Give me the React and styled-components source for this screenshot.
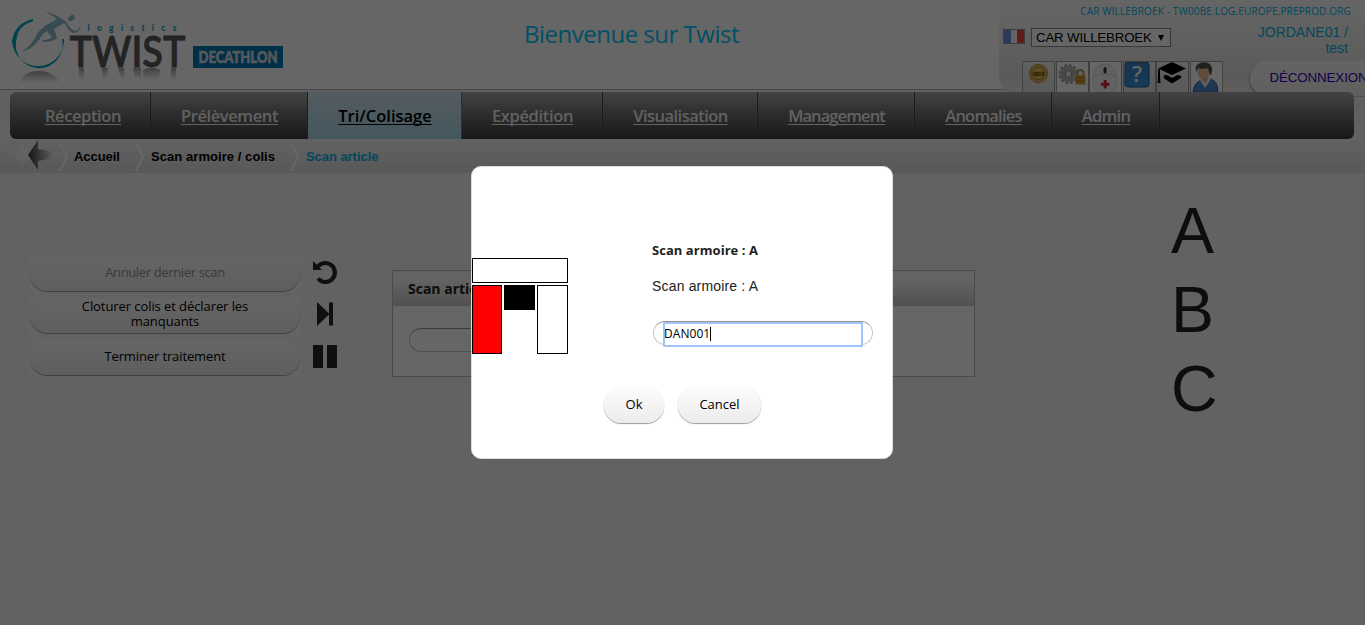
import React from "react";
import styled, { createGlobalStyle } from "styled-components";

const trebuchet = `"Trebuchet MS", "Open Sans", "Noto Sans", sans-serif`;
const arial = `Arial, "Liberation Sans", sans-serif`;

const GlobalStyle = createGlobalStyle`
  * { box-sizing: border-box; }
  body {
    margin: 0;
    height: 625px;
    overflow: hidden;
    background: #f5f5f5;
    color: #222;
    font: 13px ${trebuchet};
  }
`;

const Header = styled.header`
  display: flex;
  height: 92px;
  background: linear-gradient(#fff 0 89px, #b5b5b5 89px 90px, #eeeeee 90px);
`;
const Logo = styled.svg`
  flex: none;
  width: 300px;
  height: 89px;
  font-variant-ligatures: none;
`;
const Welcome = styled.h1`
  flex: 1;
  margin: 0;
  padding: 17px 0 0 224px;
  font-size: 24px;
  line-height: 34px;
  font-weight: 400;
  letter-spacing: -0.5px;
  color: #00c8ff;
  white-space: nowrap;
`;
const Account = styled.section`
  flex: none;
  width: 366px;
  height: 97px;
  overflow: hidden;
  border-bottom: 1px solid #c4c2be;
  border-bottom-left-radius: 24px;
  background: linear-gradient(#fdfdfd, #f1f0ef 40%, #e4e2df 80%, #efedea);
`;
const Server = styled.div`
  padding: 4px 14px 0 0;
  height: 23px;
  font-size: 10px;
  line-height: 15px;
  letter-spacing: 0.16px;
  text-align: right;
  color: #00b4e8;
`;
const AccountRow = styled.div`
  display: flex;
  height: 38px;
  padding-left: 4px;
`;
const Flag = styled.span`
  width: 22px;
  height: 15px;
  margin-top: 6px;
  border: 1px solid #999;
  background: linear-gradient(90deg, #6d8fe0 0 33%, #f8f8f8 33% 66%, #ee4444 66%);
`;
const SiteSelect = styled.div`
  display: flex;
  align-items: center;
  justify-content: space-between;
  width: 140px;
  height: 19px;
  margin: 5px 0 0 6px;
  padding: 0 6px 0 4px;
  border: 1px solid #8a8a8a;
  background: #fff;
  font: 13.33px ${arial};
  letter-spacing: -0.2px;
  color: #000;
  white-space: nowrap;
`;
const Caret = styled.span`
  border: 3.5px solid transparent;
  border-top: 6px solid #000;
  border-bottom: 0;
`;
const User = styled.div`
  flex: 1;
  padding: 1px 17px 0 0;
  font: 14px/16px ${arial};
  text-align: right;
  color: #00b4e8;
`;
const Tools = styled.div`
  display: flex;
  align-items: flex-start;
  padding-left: 23px;
`;
const Tool = styled.span`
  flex: none;
  width: 33px;
  height: 36px;
  margin-right: 0.6px;
  border: 1px solid #a0a0a0;
  background: ${(p) => (p.$plain ? "#fff" : "linear-gradient(#f4f4f4, #dcdbd9)")};
  svg { display: block; width: 30px; height: 30px; }
`;
const Logout = styled.a`
  flex: none;
  width: 150px;
  height: 35px;
  margin-left: 26px;
  padding-left: 20px;
  border-radius: 18px;
  background: linear-gradient(#fbfaf9, #efedea);
  box-shadow: -1px 1px 1px #aaa;
  font: 13.33px/34px ${arial};
  letter-spacing: -0.12px;
  color: #3000c0;
`;

const Nav = styled.nav`
  position: relative;
  display: flex;
  width: 1344px;
  height: 47px;
  margin-left: 10px;
  border-radius: 6px;
  overflow: hidden;
  background: linear-gradient(#a8a8a8, #747474 45%, #3a3a3a);
`;
const NavItem = styled.a`
  flex: none;
  width: ${(p) => p.$w}px;
  padding-left: ${(p) => p.$indent || 1}px;
  border-right: 1px solid ${(p) => (p.$active ? "#5d8191" : "#454545")};
  box-shadow: inset -1px 0 rgba(255, 255, 255, 0.06);
  text-align: center;
  font-size: 16.5px;
  line-height: 47px;
  font-weight: 600;
  letter-spacing: ${(p) => p.$track}px;
  text-decoration: underline;
  text-decoration-thickness: 1px;
  text-decoration-skip-ink: none;
  text-underline-offset: 2px;
  color: ${(p) => (p.$active ? "#000" : "#f2f2f2")};
  background: ${(p) => (p.$active ? "linear-gradient(#d2e6ee, #a9d8ec)" : "none")};
`;

const NavBand = styled.div`
  background: linear-gradient(#eee, #f6f6f6);
`;
const Crumbs = styled.div`
  display: flex;
  align-items: center;
  height: 34px;
  background: linear-gradient(#f4f4f4, #dddddd);
  font: bold 13px ${arial};
  color: #000;
  white-space: nowrap;
`;
const Back = styled.svg`
  width: 40px;
  height: 34px;
  margin-left: 14px;
`;
const Chevron = styled.svg`
  width: 10px;
  height: 30px;
  margin: 2px ${(p) => p.$after}px 0 ${(p) => p.$before}px;
`;
const Crumb = styled.span`
  width: ${(p) => p.$w}px;
  letter-spacing: ${(p) => p.$track || 0}px;
  color: ${(p) => (p.$current ? "#00b4e8" : "#000")};
`;

const Main = styled.main`
  display: flex;
  align-items: flex-start;
  height: 452px;
`;
const Actions = styled.div`
  display: flex;
  flex-direction: column;
  gap: 4px;
  margin: 82px 0 0 29px;
`;
const ActionRow = styled.div`
  display: flex;
  align-items: center;
  gap: 12px;
  height: 38px;
`;
const ActionBack = styled.div`
  width: 272px;
  height: 38px;
  padding: 1px 1px 0;
  background: #fbfbfb;
`;
const Button = styled.button`
  display: block;
  width: ${(p) => p.$w}px;
  height: ${(p) => p.$h || 35}px;
  padding: 0 ${(p) => p.$pad || 0}px ${(p) => p.$lift || 2}px;
  border: 0;
  border-radius: 18px;
  background: linear-gradient(#fdfdfd, #ebebeb);
  box-shadow: 0 1px 1px #999, 0 0 1px #ccc;
  font: 13px/15px ${trebuchet};
  letter-spacing: ${(p) => p.$track || 0}px;
  color: ${(p) => (p.disabled ? "#909090" : "#000")};
`;
const ActionIcon = styled.svg`
  width: 24px;
  height: 24px;
  margin-top: -5px;
`;
const Panel = styled.section`
  width: 583px;
  height: 107px;
  margin: 97px 0 0 55px;
  border: 1px solid #b9b9b9;
  background: #fff;
`;
const PanelTitle = styled.h2`
  height: 35px;
  margin: 0;
  padding-left: 15px;
  background: linear-gradient(#f4f4f4, #fbfbfb 20%, #cdcac5);
  font-size: 14px;
  line-height: 36px;
  font-weight: 700;
`;
const Pill = styled.div`
  width: ${(p) => p.$w}px;
  height: 24px;
  margin: ${(p) => p.$m};
  padding: 0 9px;
  border: 1px solid #ccc8c4;
  border-top-color: #98948e;
  border-radius: 12px;
  background: #fff;
`;
const Bays = styled.div`
  margin: 19px 0 0 196px;
  font: 64.5px/79px ${arial};
  color: #222;
`;

const Overlay = styled.div`
  position: fixed;
  inset: 0;
  display: flex;
  align-items: center;
  justify-content: center;
  padding-right: 1px;
  background: rgba(0, 0, 0, 0.6);
`;
const Dialog = styled.div`
  width: 422px;
  height: 293px;
  border: 1px solid #ddd;
  border-radius: 10px;
  background: #fff;
`;
const DialogBody = styled.div`
  display: flex;
  height: 220px;
`;
const Cabinet = styled.div`
  display: grid;
  grid-template-columns: 30px 31px 31px;
  grid-template-rows: 25px 69px;
  gap: 2px;
  width: 96px;
  margin-top: 91px;
  align-items: start;
`;
const Door = styled.div`
  grid-column: ${(p) => (p.$wide ? "1 / -1" : "auto")};
  height: ${(p) => p.$h}px;
  border: 1px solid #000;
  background: ${(p) => p.$fill || "#fff"};
`;
const Form = styled.div`
  margin: 74px 0 0 84px;
`;
const FormTitle = styled.div`
  font-weight: 700;
  line-height: 18px;
  letter-spacing: 0.05px;
`;
const FormLabel = styled.div`
  margin: 17px 0 25px;
  font: 14px/20px ${arial};
  letter-spacing: 0.17px;
`;
const Field = styled.div`
  display: flex;
  align-items: center;
  width: 200px;
  height: 25px;
  padding-bottom: 2px;
  border: 2px solid #a0c3fa;
  border-radius: 1px;
  background: #fff;
  font-size: 12px;
  letter-spacing: 0.05px;
  text-indent: -1px;
  color: #000;
`;
const Cursor = styled.span`
  width: 1px;
  height: 14px;
  background: #000;
`;
const Buttons = styled.div`
  display: flex;
  gap: 14px;
  padding: 1px 0 0 132px;
`;

const ink = "#262626";

function TwistLogo() {
  return (
    <Logo viewBox="0 0 300 89">
      <defs>
        <linearGradient id="shade" x1="0" y1="0" x2="0" y2="1">
          <stop offset="0" stopColor="#777" stopOpacity=".75" />
          <stop offset="1" stopColor="#999" stopOpacity="0" />
        </linearGradient>
      </defs>
      <path d="M20 83Q24 71 38 71Q54 71 60 83Z" fill="url(#shade)" />
      <g fill="url(#shade)">
        <rect x="79" y="68" width="5" height="12" />
        <path d="M102 68h6l-2 12h-3zM118 68h6l1 11h-4zM133 68h8v10h-6zM143 70q8-5 17 0l-1 10h-15z" />
        <rect x="171" y="68" width="5" height="12" />
      </g>
      <path d="M33 19Q15 23 12 41A26 26 0 1 0 64 39L62 39A23.500 23.500 0 1 1 17 37Q19 25 33 21.500Z" fill="#00a5c4" />
      <g fill="#8abccb">
        <ellipse cx="71.500" cy="18" rx="3.700" ry="2.500" transform="rotate(-35 71.500 18)" />
        <path d="M45 10.500L59 17Q66 21 68 25Q71 30 75 31Q79 30 81 24Q80 32 75 33Q70 33 67 27L64 23L54 29Q56 34 57 38Q53 42 43 42L42 40Q50 40 52 37L47 31Q42 34 39 40Q33 49 21 52Q30 47 35 38Q38 31 45 26L57 19Z" />
      </g>
      <text x="87.500" y="30.500" fontFamily="Lato, sans-serif" fontSize="8.500" fontWeight="700" fill="#009bbb" textLength="89">logistics</text>
      <text x="69.500" y="66.500" fontFamily="Lato, sans-serif" fontSize="43" fontWeight="600" fill="#58595b" stroke="#58595b" strokeWidth=".8" strokeLinejoin="round" textLength="116" lengthAdjust="spacingAndGlyphs">TWIST</text>
      <rect x="193" y="46" width="90" height="22" fill="#0079b5" />
      <text x="198.500" y="63" fontFamily="Lato, sans-serif" fontSize="17" fontWeight="900" fill="#d7dde2" stroke="#d7dde2" strokeWidth=".6" textLength="79" lengthAdjust="spacingAndGlyphs">DECATHLON</text>
    </Logo>
  );
}

function ToolIcons() {
  return (
    <>
      <Tool>
        <svg viewBox="0 0 30 30">
          <circle cx="15.500" cy="11.500" r="9" fill="#d8b458" stroke="#b98f35" strokeWidth="1.500" strokeDasharray="2 1" />
          <circle cx="15.500" cy="11.500" r="6" fill="#e6c670" stroke="#aa7f26" />
          <path d="M8 9.500h15v5h-15z" fill="#c99e3c" />
          <path d="M11 10v4M13 10v4l2-4v4M17 10v4M19 10l2 4M21 10l-2 4" stroke="#6e4d10" fill="none" />
        </svg>
      </Tool>
      <Tool $plain>
        <svg viewBox="0 0 30 30">
          <circle cx="11.500" cy="12" r="8.500" fill="none" stroke="#a5a5a5" strokeWidth="3" strokeDasharray="3 1.450" />
          <circle cx="11.500" cy="12" r="6" fill="none" stroke="#b4b4b4" strokeWidth="4.500" />
          <circle cx="11.500" cy="12" r="3.400" fill="#eee" stroke="#777" />
          <path d="M20.500 14v-3a3 3 0 0 1 6 0v3" fill="none" stroke="#a79767" strokeWidth="2" />
          <rect x="18.500" y="13" width="10" height="9.500" rx="1" fill="#d0a13c" />
          <path d="M19 16h9M19 19h9" stroke="#ad7b1b" />
        </svg>
      </Tool>
      <Tool $plain>
        <svg viewBox="0 0 30 30">
          <path d="M15 2C22 2 27 9 27 19Q27 31 15 32Q3 31 3 19C3 9 8 2 15 2Z" fill="#f2f4f4" stroke="#d4d8d8" />
          <path d="M4 14Q15 10 26 14" fill="none" stroke="#d0d0d0" />
          <rect x="13.500" y="5" width="3" height="6.500" rx="1.500" fill="#333" />
          <path d="M13.700 18h3v2.700h2.800v3h-2.800v2.800h-3v-2.800h-2.800v-3h2.800z" fill="#d32f3c" />
        </svg>
      </Tool>
      <Tool>
        <svg viewBox="0 0 30 30">
          <defs>
            <linearGradient id="help" x1="0" y1="0" x2="0" y2="1">
              <stop stopColor="#3f7fc0" />
              <stop offset="1" stopColor="#3596e2" />
            </linearGradient>
          </defs>
          <rect x="1" y="0" width="24" height="25" rx="3" fill="url(#help)" stroke="#1d5f9f" />
          <text x="13" y="20" textAnchor="middle" fontFamily="Open Sans, sans-serif" fontSize="22" fontWeight="600" fill="#f3f7fb">?</text>
        </svg>
      </Tool>
      <Tool>
        <svg viewBox="0 0 30 30">
          <path d="M15 0L29 6.500L15 13L1 6.500ZM1 7.500H3V14L3.500 21H0.500L1 14Z" fill="#000" />
          <path d="M6.500 13.500L10 13L15 16L20.500 13L24.500 14L24 16L15 21.500L7 16.500Z" fill="#000" />
        </svg>
      </Tool>
      <Tool $plain>
        <svg viewBox="0 0 30 30">
          <path d="M2 30Q3 20 11 18L20 17Q27 20 27 30Z" fill="#5487cc" stroke="#315f9e" />
          <path d="M9 18L14 26L20 17L17 14L11 15Z" fill="#eef3fa" />
          <path d="M11 13h6v4l-3 4l-3-4z" fill="#e3a675" />
          <ellipse cx="12.500" cy="10.500" rx="6" ry="7" fill="#f0bd92" />
          <path d="M5.500 10Q3 4 8 1.500Q13-1 18 1.500Q23 5 20 13L18.500 13Q19 8 16 6Q11 8 7 6Z" fill="#55524f" />
        </svg>
      </Tool>
    </>
  );
}

const sections = [
  { label: "Réception", w: 141, indent: 6, track: -0.4 },
  { label: "Prélèvement", w: 157, track: -0.4 },
  { label: "Tri/Colisage", w: 154, track: 0, active: true },
  { label: "Expédition", w: 141, track: -0.35 },
  { label: "Visualisation", w: 155, track: -0.53 },
  { label: "Management", w: 157, track: -0.9 },
  { label: "Anomalies", w: 137, track: -0.8 },
  { label: "Admin", w: 108, track: -0.7 },
];

function Separator({ before, after }) {
  return (
    <Chevron $before={before} $after={after} viewBox="0 0 10 30">
      <path d="M1 1L8 15L1 29" fill="none" stroke="#fff" strokeWidth="2" />
    </Chevron>
  );
}

export default function App() {
  return (
    <>
      <GlobalStyle />
      <Header>
        <TwistLogo />
        <Welcome>Bienvenue sur Twist</Welcome>
        <Account>
          <Server>CAR WILLEBROEK - TW00BE.LOG.EUROPE.PREPROD.ORG</Server>
          <AccountRow>
            <Flag />
            <SiteSelect>CAR WILLEBROEK<Caret /></SiteSelect>
            <User>JORDANE01 /<br />test</User>
          </AccountRow>
          <Tools>
            <ToolIcons />
            <Logout>DÉCONNEXION</Logout>
          </Tools>
        </Account>
      </Header>
      <NavBand>
        <Nav>
          {sections.map((s) => (
            <NavItem key={s.label} $w={s.w} $indent={s.indent} $track={s.track} $active={s.active}>{s.label}</NavItem>
          ))}
        </Nav>
      </NavBand>
      <Crumbs>
        <Back viewBox="0 0 40 34">
          <defs>
            <linearGradient id="fade">
              <stop stopColor="#333" />
              <stop offset="1" stopColor="#333" stopOpacity="0" />
            </linearGradient>
          </defs>
          <path d="M1 16L10 2V10L24 12V21L10 22V30Z" fill="#fff" opacity=".5" />
          <path d="M14 16L24 1V10L39 13V19L24 22V31Z" fill="url(#fade)" />
        </Back>
        <Separator before={5} after={5} />
        <Crumb $w={46} $track={-0.05}>Accueil</Crumb>
        <Separator before={15} after={6} />
        <Crumb $w={124} $track={0.06}>Scan armoire / colis</Crumb>
        <Separator before={15} after={6} />
        <Crumb $w={80} $current $track={-0.05}>Scan article</Crumb>
      </Crumbs>
      <Main>
        <Actions>
          <ActionRow>
            <ActionBack><Button $w={270} $lift={3} $track={-0.36} disabled>Annuler dernier scan</Button></ActionBack>
            <ActionIcon viewBox="0 0 24 24">
              <path d="M5 6.500A9.500 9.500 0 1 1 5 18.500" fill="none" stroke={ink} strokeWidth="4.200" />
              <path d="M0 1V10H9Z" fill={ink} />
            </ActionIcon>
          </ActionRow>
          <ActionRow>
            <ActionBack><Button $w={270} $pad={45} $lift={3} $track={-0.08}>Cloturer colis et déclarer les manquants</Button></ActionBack>
            <ActionIcon viewBox="0 0 24 24">
              <path d="M4 0L16 11.500V0.500H20V23.500H16V12.500L4 24Z" fill={ink} />
            </ActionIcon>
          </ActionRow>
          <ActionRow>
            <ActionBack><Button $w={270} $lift={3} $track={-0.12}>Terminer traitement</Button></ActionBack>
            <ActionIcon viewBox="0 0 24 24">
              <path d="M0 1h10v23H0zM14 1h10v23H14z" fill={ink} />
            </ActionIcon>
          </ActionRow>
        </Actions>
        <Panel>
          <PanelTitle>Scan article</PanelTitle>
          <Pill $w={220} $m="22px 0 0 16px" />
        </Panel>
        <Bays>
          <div>A</div>
          <div>B</div>
          <div>C</div>
        </Bays>
      </Main>
      <Overlay>
        <Dialog>
          <DialogBody>
            <Cabinet>
              <Door $wide $h={25} />
              <Door $h={69} $fill="#f00" />
              <Door $h={25} $fill="#000" />
              <Door $h={69} />
            </Cabinet>
            <Form>
              <FormTitle>Scan armoire : A</FormTitle>
              <FormLabel>Scan armoire : A</FormLabel>
              <Pill $w={220} $m="0 0 0 1px">
                <Field>DAN001<Cursor /></Field>
              </Pill>
            </Form>
          </DialogBody>
          <Buttons>
            <Button $w={60} $lift={2}>Ok</Button>
            <Button $w={83} $lift={2}>Cancel</Button>
          </Buttons>
        </Dialog>
      </Overlay>
    </>
  );
}
